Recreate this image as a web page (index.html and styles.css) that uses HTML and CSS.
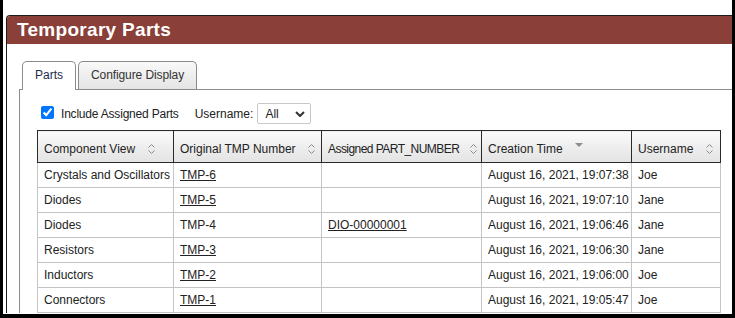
FILE: index.html
```html
<!DOCTYPE html>
<html lang="en">
<head>
  <meta charset="UTF-8" />
  <title>Temporary Parts</title>
  <link rel="stylesheet" href="styles.css">
</head>
<body>
  <div class="frame">
    <section class="panel">
      <h1 class="panel-title">Temporary Parts</h1>
      <div class="panel-body">
        <div class="tabs">
          <a href="#" class="tab active">Parts</a>
          <a href="#" class="tab">Configure Display</a>
        </div>
        <div class="tab-panel">
          <div class="filters">
            <label class="check">
              <input type="checkbox" checked> Include Assigned Parts
            </label>
            <label class="user-label">Username:</label>
            <span class="select-wrap">
              <select class="select">
                <option>All</option>
                <option>Jane</option>
                <option>Joe</option>
              </select>
              <svg class="chev" width="10" height="6" viewBox="0 0 10 6"><path d="M1 1 L5 5 L9 1" fill="none" stroke="#333" stroke-width="2"/></svg>
            </span>
          </div>

          <table class="grid">
            <colgroup>
              <col style="width:136px">
              <col style="width:148px">
              <col style="width:160px">
              <col style="width:150px">
              <col style="width:89px">
            </colgroup>
            <thead>
              <tr>
                <th>Component View <svg class="sort" width="7" height="10" viewBox="0 0 7 10"><path d="M0.5 3.5 L3.5 0.5 L6.5 3.5 M0.5 6.5 L3.5 9.5 L6.5 6.5" fill="none" stroke="#8c8c8c" stroke-width="1"/></svg></th>
                <th>Original TMP Number <svg class="sort" width="7" height="10" viewBox="0 0 7 10"><path d="M0.5 3.5 L3.5 0.5 L6.5 3.5 M0.5 6.5 L3.5 9.5 L6.5 6.5" fill="none" stroke="#8c8c8c" stroke-width="1"/></svg></th>
                <th><span class="tight">Assigned PART_NUMBER</span> <svg class="sort" width="7" height="10" viewBox="0 0 7 10"><path d="M0.5 3.5 L3.5 0.5 L6.5 3.5 M0.5 6.5 L3.5 9.5 L6.5 6.5" fill="none" stroke="#8c8c8c" stroke-width="1"/></svg></th>
                <th>Creation Time <svg class="sort down" width="8" height="10" viewBox="0 0 8 10"><path d="M0 1 L8 1 L4 5 Z" fill="#8c8c8c"/></svg></th>
                <th>Username <svg class="sort" width="7" height="10" viewBox="0 0 7 10"><path d="M0.5 3.5 L3.5 0.5 L6.5 3.5 M0.5 6.5 L3.5 9.5 L6.5 6.5" fill="none" stroke="#8c8c8c" stroke-width="1"/></svg></th>
              </tr>
            </thead>
            <tbody>
              <tr>
                <td>Crystals and Oscillators</td>
                <td><a href="#">TMP-6</a></td>
                <td></td>
                <td>August 16, 2021, 19:07:38</td>
                <td>Joe</td>
              </tr>
              <tr>
                <td>Diodes</td>
                <td><a href="#">TMP-5</a></td>
                <td></td>
                <td>August 16, 2021, 19:07:10</td>
                <td>Jane</td>
              </tr>
              <tr>
                <td>Diodes</td>
                <td>TMP-4</td>
                <td><a href="#">DIO-00000001</a></td>
                <td>August 16, 2021, 19:06:46</td>
                <td>Jane</td>
              </tr>
              <tr>
                <td>Resistors</td>
                <td><a href="#">TMP-3</a></td>
                <td></td>
                <td>August 16, 2021, 19:06:30</td>
                <td>Jane</td>
              </tr>
              <tr>
                <td>Inductors</td>
                <td><a href="#">TMP-2</a></td>
                <td></td>
                <td>August 16, 2021, 19:06:00</td>
                <td>Joe</td>
              </tr>
              <tr>
                <td>Connectors</td>
                <td><a href="#">TMP-1</a></td>
                <td></td>
                <td>August 16, 2021, 19:05:47</td>
                <td>Joe</td>
              </tr>
            </tbody>
          </table>
        </div>
      </div>
    </section>
  </div>
</body>
</html>
```

FILE: styles.css
```css
* {
  margin: 0;
  padding: 0;
  box-sizing: border-box;
}

html, body {
  background: #fff;
}

body {
  font-family: "Liberation Sans", Arial, sans-serif;
  font-size: 12px;
  color: #222;
}

.frame {
  height: 318px;
  overflow: hidden;
  border-left: 3px solid #000;
  border-right: 3px solid #000;
  border-bottom: 4px solid #000;
  padding: 15px 0 0 3px;
}

.panel {
  margin-right: -40px;
  border-top: 1px solid #1c1c1c;
  border-left: 1px solid #1c1c1c;
  border-radius: 4px 0 0 0;
  overflow: hidden;
}

.panel-title {
  background: #8a4039;
  color: #fff;
  font-size: 19px;
  font-weight: bold;
  letter-spacing: 0.3px;
  height: 28px;
  line-height: 28px;
  padding-left: 10px;
}

.panel-body {
  padding: 17px 0 0 12px;
}

.tabs {
  display: flex;
  gap: 2px;
  padding-left: 3px;
  height: 28px;
  position: relative;
  z-index: 1;
}

.tab {
  display: block;
  height: 29px;
  line-height: 27px;
  padding: 0 12px;
  border: 1px solid #8c8c8c;
  border-bottom: none;
  border-radius: 5px 5px 0 0;
  color: #333;
  text-decoration: none;
  background: linear-gradient(to bottom, #f9f9f9, #e4e4e4);
}

.tab.active {
  background: #fff;
  color: #1d2d4d;
}

.tab + .tab {
  height: 28px;
  letter-spacing: -0.1px;
}

.tab-panel {
  border-top: 1px solid #8c8c8c;
  border-left: 1px solid #8c8c8c;
  padding: 13px 0 0 17px;
}

.filters {
  display: flex;
  align-items: center;
  height: 21px;
}

.check {
  display: flex;
  align-items: center;
  gap: 7px;
  letter-spacing: -0.2px;
}

.check input {
  width: 13px;
  height: 13px;
  margin: 0 0 2px 4px;
  accent-color: #0075ff;
}

.user-label {
  margin-left: 16px;
}

.select-wrap {
  position: relative;
  margin-left: 4px;
  display: inline-block;
}

.select {
  appearance: none;
  width: 54px;
  height: 21px;
  border: 1px solid #c8c8c8;
  border-radius: 2px;
  background: #fff;
  font-family: inherit;
  font-size: 12px;
  color: #222;
  padding-left: 7px;
}

.chev {
  position: absolute;
  right: 6px;
  top: 8px;
  pointer-events: none;
}

.grid {
  margin-top: 6px;
  width: 683px;
  table-layout: fixed;
  border-collapse: collapse;
}

.grid th {
  height: 32px;
  padding: 4px 6px 0;
  text-align: left;
  font-weight: normal;
  white-space: nowrap;
  overflow: hidden;
  border: 1px solid #2a2a2a;
  background: linear-gradient(to bottom, #fbfbfb 0%, #efefef 45%, #e3e3e3 100%);
}

.tight {
  letter-spacing: -0.55px;
}

.sort {
  margin-left: 9px;
  vertical-align: -1px;
}

.tight + .sort {
  margin-left: 7px;
}

.sort.down {
  vertical-align: 1px;
}

.grid td {
  height: 25px;
  padding: 0 6px;
  white-space: nowrap;
  border: 1px solid #c4c4c4;
}

.grid a {
  color: #222;
}
```
